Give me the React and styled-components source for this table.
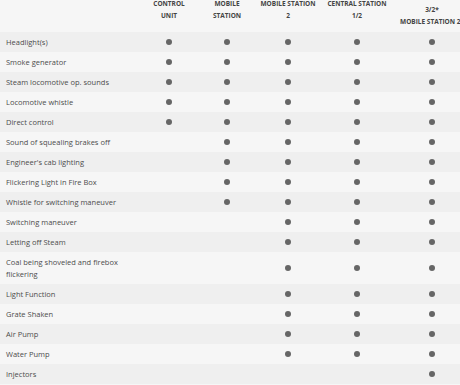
import { createGlobalStyle, styled } from "styled-components";

const GlobalStyle = createGlobalStyle`
    html, body {
        margin:0;
        padding:0;
        overflow:hidden;
        background:#f6f6f6;
        font-family:"Open Sans", "Liberation Sans", sans-serif;
    }
`;

const Table = styled.table`
    border-collapse:collapse;
    table-layout:fixed;
    width:470px;
    margin-top:-8px;
`;

const HeadCell = styled.th`
    padding:0 0 4px;
    font-size:6.5px;
    line-height:12px;
    font-weight:700;
    color:#444;
    text-align:center;
    vertical-align:middle;
    text-transform:uppercase;
`;

const Row = styled.tr`
    background:${p => (p.$odd ? "#efefef" : "#f6f6f6")};
`;

const LabelCell = styled.td`
    padding:4px 20px 4px 6px;
    font-size:7.5px;
    line-height:12px;
    color:#4c4c4c;
    vertical-align:middle;
`;

const DotCell = styled.td`
    padding:0;
    font-size:0;
    line-height:0;
    text-align:center;
    vertical-align:middle;
`;

const Dot = styled.span`
    display:inline-block;
    width:6px;
    height:6px;
    border-radius:50%;
    background:#666;
`;

const columns = [
    { width: 140 },
    { width: 58, title: ["Control", "Unit"] },
    { width: 58, title: ["Mobile", "Station"] },
    { width: 64, title: ["Mobile Station", "2"] },
    { width: 74, title: ["Central Station", "1/2"] },
    { width: 76, title: ["Central Station", "3/2*", "Mobile Station 2*"] },
];

// which units support each function, in column order
const rows = [
    ["Headlight(s)", [1, 1, 1, 1, 1]],
    ["Smoke generator", [1, 1, 1, 1, 1]],
    ["Steam locomotive op. sounds", [1, 1, 1, 1, 1]],
    ["Locomotive whistle", [1, 1, 1, 1, 1]],
    ["Direct control", [1, 1, 1, 1, 1]],
    ["Sound of squealing brakes off", [0, 1, 1, 1, 1]],
    ["Engineer's cab lighting", [0, 1, 1, 1, 1]],
    ["Flickering Light in Fire Box", [0, 1, 1, 1, 1]],
    ["Whistle for switching maneuver", [0, 1, 1, 1, 1]],
    ["Switching maneuver", [0, 0, 1, 1, 1]],
    ["Letting off Steam", [0, 0, 1, 1, 1]],
    ["Coal being shoveled and firebox flickering", [0, 0, 1, 1, 1]],
    ["Light Function", [0, 0, 1, 1, 1]],
    ["Grate Shaken", [0, 0, 1, 1, 1]],
    ["Air Pump", [0, 0, 1, 1, 1]],
    ["Water Pump", [0, 0, 1, 1, 1]],
    ["Injectors", [0, 0, 0, 0, 1]],
];

export default function App() {
    return (
        <>
            <GlobalStyle />
            <Table>
                <colgroup>
                    {columns.map((c, i) => <col key={i} style={{ width: c.width }} />)}
                </colgroup>
                <thead>
                    <tr>
                        {columns.map((c, i) => (
                            <HeadCell key={i}>
                                {c.title && c.title.map((t, j) => <div key={j}>{t}</div>)}
                            </HeadCell>
                        ))}
                    </tr>
                </thead>
                <tbody>
                    {rows.map(([label, marks], i) => (
                        <Row key={label} $odd={i % 2 === 0}>
                            <LabelCell>{label}</LabelCell>
                            {marks.map((m, j) => (
                                <DotCell key={j}>{m ? <Dot /> : null}</DotCell>
                            ))}
                        </Row>
                    ))}
                </tbody>
            </Table>
        </>
    );
}
